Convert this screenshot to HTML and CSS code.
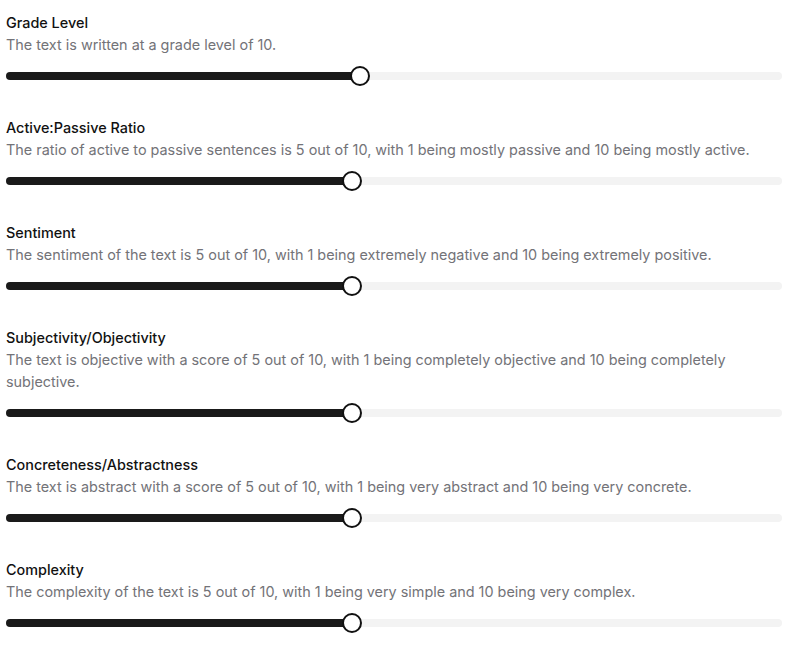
FILE: index.html
```html
<!DOCTYPE html>
<html>
<head>
<meta charset="utf-8">
<link rel="stylesheet" href="styles.css">
</head>
<body>
<div class="list">
  <section class="metric">
    <h3 class="title">Grade Level</h3>
    <p class="desc">The text is written at a grade level of 10.</p>
    <div class="slider"><div class="fill" style="width:354px"></div><div class="thumb" style="left:344px"></div></div>
  </section>
  <section class="metric">
    <h3 class="title">Active:Passive Ratio</h3>
    <p class="desc">The ratio of active to passive sentences is 5 out of 10, with 1 being mostly passive and 10 being mostly active.</p>
    <div class="slider"><div class="fill" style="width:346px"></div><div class="thumb" style="left:336px"></div></div>
  </section>
  <section class="metric">
    <h3 class="title">Sentiment</h3>
    <p class="desc">The sentiment of the text is 5 out of 10, with 1 being extremely negative and 10 being extremely positive.</p>
    <div class="slider"><div class="fill" style="width:346px"></div><div class="thumb" style="left:336px"></div></div>
  </section>
  <section class="metric">
    <h3 class="title">Subjectivity/Objectivity</h3>
    <p class="desc">The text is objective with a score of 5 out of 10, with 1 being completely objective and 10 being completely subjective.</p>
    <div class="slider"><div class="fill" style="width:346px"></div><div class="thumb" style="left:336px"></div></div>
  </section>
  <section class="metric">
    <h3 class="title">Concreteness/Abstractness</h3>
    <p class="desc">The text is abstract with a score of 5 out of 10, with 1 being very abstract and 10 being very concrete.</p>
    <div class="slider"><div class="fill" style="width:346px"></div><div class="thumb" style="left:336px"></div></div>
  </section>
  <section class="metric">
    <h3 class="title">Complexity</h3>
    <p class="desc">The complexity of the text is 5 out of 10, with 1 being very simple and 10 being very complex.</p>
    <div class="slider"><div class="fill" style="width:346px"></div><div class="thumb" style="left:336px"></div></div>
  </section>
</div>
</body>
</html>
```
FILE: styles.css
```css
html, body {
  margin: 0;
  padding: 0;
  background: #ffffff;
}
body {
  font-family: Inter, "Noto Sans", "Liberation Sans", sans-serif;
  -webkit-font-smoothing: antialiased;
}
.list {
  display: flex;
  flex-direction: column;
  gap: 31.3px;
  padding: 12px 18px 0 6px;
}
.metric {
  display: flex;
  flex-direction: column;
}
.title {
  margin: 0;
  font-size: 14.4px;
  line-height: 22px;
  font-weight: 500;
  color: #111111;
}
.desc {
  margin: 0;
  font-size: 14.4px;
  line-height: 22px;
  font-weight: 400;
  color: #737378;
  max-width: 760px;
}
.slider {
  position: relative;
  height: 20px;
  margin-top: 9.8px;
}
.slider::before {
  content: "";
  position: absolute;
  left: 0;
  right: 0;
  top: 6px;
  height: 8px;
  border-radius: 4px;
  background: #f3f3f3;
}
.fill {
  position: absolute;
  left: 0;
  top: 6px;
  height: 8px;
  border-radius: 4px;
  background: #1a1a1a;
}
.thumb {
  position: absolute;
  top: 0;
  width: 16px;
  height: 16px;
  border: 2px solid #111111;
  border-radius: 50%;
  background: #ffffff;
}
```
